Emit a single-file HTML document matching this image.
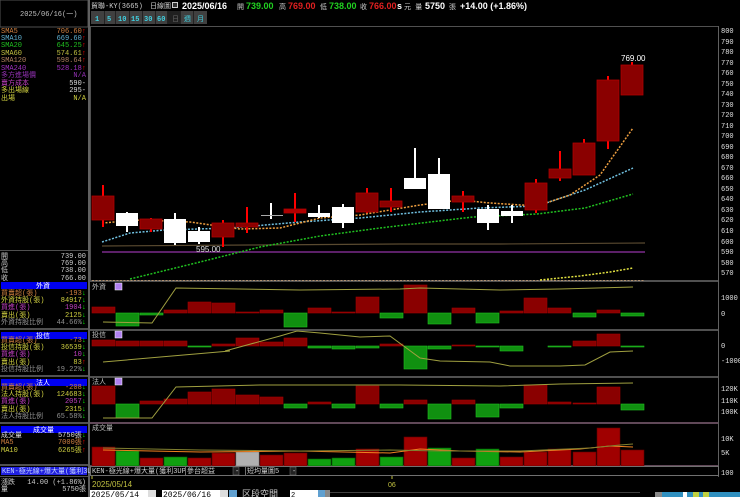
<!DOCTYPE html>
<html><head><meta charset="utf-8"><style>
html,body{margin:0;padding:0;background:#000;width:740px;height:497px;overflow:hidden}
svg{display:block}
text{font-family:"Liberation Mono","WenQuanYi Zen Hei","Noto Sans CJK TC",monospace;font-size:7px}
.b{font-family:"Liberation Sans","WenQuanYi Zen Hei",sans-serif;font-weight:bold;font-size:9px}
.ax{fill:#e0e0e0;font-family:"Liberation Sans",sans-serif;font-size:8px}
</style></head><body>
<svg width="740" height="497" viewBox="0 0 740 497" xmlns="http://www.w3.org/2000/svg">
<rect width="740" height="497" fill="#000"/>
<!-- left panel -->
<rect x="0" y="0" width="88" height="27" fill="#000" stroke="#505050"/>
<text x="20" y="16" fill="#c0c0c0">2025/06/16(一)</text>
<rect x="88" y="0" width="2" height="497" fill="#606060"/>
<g>
<text x="1" y="33" fill="#d08040">SMA5</text><text x="86" y="33" fill="#d08040" text-anchor="end">706.60<tspan fill="#f00">↑</tspan></text>
<text x="1" y="40" fill="#60b0d0">SMA10</text><text x="86" y="40" fill="#60b0d0" text-anchor="end">669.60<tspan fill="#f00">↑</tspan></text>
<text x="1" y="47" fill="#20c020">SMA20</text><text x="86" y="47" fill="#20c020" text-anchor="end">645.25<tspan fill="#f00">↑</tspan></text>
<text x="1" y="55" fill="#c0c040">SMA60</text><text x="86" y="55" fill="#c0c040" text-anchor="end">574.61<tspan fill="#f00">↑</tspan></text>
<text x="1" y="62" fill="#b08060">SMA120</text><text x="86" y="62" fill="#b08060" text-anchor="end">598.64<tspan fill="#f00">↑</tspan></text>
<text x="1" y="70" fill="#a030c0">SMA240</text><text x="86" y="70" fill="#a030c0" text-anchor="end">528.18<tspan fill="#f00">↑</tspan></text>
<text x="1" y="77" fill="#9030b0">多方進場價</text><text x="86" y="77" fill="#9030b0" text-anchor="end">N/A</text>
<text x="1" y="85" fill="#c040c0">賣方成本</text><text x="86" y="85" fill="#ddd" text-anchor="end">590-</text>
<text x="1" y="92" fill="#d0d040">多出場線</text><text x="86" y="92" fill="#ddd" text-anchor="end">295-</text>
<text x="1" y="100" fill="#d0d040">出場</text><text x="86" y="100" fill="#d0d040" text-anchor="end">N/A</text>
</g>
<rect x="0" y="250" width="88" height="1" fill="#505050"/>
<g fill="#ccc">
<text x="1" y="258">開</text><text x="86" y="258" text-anchor="end">739.00</text>
<text x="1" y="265">高</text><text x="86" y="265" text-anchor="end">769.00</text>
<text x="1" y="272">低</text><text x="86" y="272" text-anchor="end">738.00</text>
<text x="1" y="280">收</text><text x="86" y="280" text-anchor="end">766.00</text>
</g>
<rect x="1" y="282" width="86" height="7" fill="#0000f0"/><text x="36" y="288" fill="#fff">外資</text>
<text x="1" y="295" fill="#d08040">買賣超(張)</text><text x="86" y="295" fill="#d08040" text-anchor="end">-193<tspan fill="#0f0">↓</tspan></text>
<text x="1" y="302" fill="#d0d040">外資持股(張)</text><text x="86" y="302" fill="#d0d040" text-anchor="end">84917<tspan fill="#0f0">↓</tspan></text>
<text x="1" y="309" fill="#c040c0">買進(張)</text><text x="86" y="309" fill="#c040c0" text-anchor="end">1904<tspan fill="#0f0">↓</tspan></text>
<text x="1" y="317" fill="#d0d040">賣出(張)</text><text x="86" y="317" fill="#d0d040" text-anchor="end">2125<tspan fill="#0f0">↓</tspan></text>
<text x="1" y="324" fill="#909090">外資持股比例</text><text x="86" y="324" fill="#909090" text-anchor="end">44.66%<tspan fill="#0f0">↓</tspan></text>
<rect x="0" y="328" width="88" height="2" fill="#505050"/>
<rect x="1" y="332" width="86" height="7" fill="#0000f0"/><text x="36" y="338" fill="#fff">投信</text>
<text x="1" y="342" fill="#d08040">買賣超(張)</text><text x="86" y="342" fill="#d08040" text-anchor="end">-73<tspan fill="#0f0">↓</tspan></text>
<text x="1" y="349" fill="#d0d040">投信持股(張)</text><text x="86" y="349" fill="#d0d040" text-anchor="end">36539<tspan fill="#0f0">↓</tspan></text>
<text x="1" y="356" fill="#c040c0">買進(張)</text><text x="86" y="356" fill="#c040c0" text-anchor="end">10<tspan fill="#0f0">↓</tspan></text>
<text x="1" y="364" fill="#d0d040">賣出(張)</text><text x="86" y="364" fill="#d0d040" text-anchor="end">83<tspan fill="#f00">↑</tspan></text>
<text x="1" y="371" fill="#909090">投信持股比例</text><text x="86" y="371" fill="#909090" text-anchor="end">19.22%<tspan fill="#0f0">↓</tspan></text>
<rect x="0" y="375" width="88" height="2" fill="#505050"/>
<rect x="1" y="379" width="86" height="7" fill="#0000f0"/><text x="36" y="385" fill="#fff">法人</text>
<text x="1" y="389" fill="#d08040">買賣超(張)</text><text x="86" y="389" fill="#d08040" text-anchor="end">-208<tspan fill="#0f0">↓</tspan></text>
<text x="1" y="396" fill="#d0d040">法人持股(張)</text><text x="86" y="396" fill="#d0d040" text-anchor="end">124683<tspan fill="#0f0">↓</tspan></text>
<text x="1" y="403" fill="#c040c0">買進(張)</text><text x="86" y="403" fill="#c040c0" text-anchor="end">2057<tspan fill="#0f0">↓</tspan></text>
<text x="1" y="411" fill="#d0d040">賣出(張)</text><text x="86" y="411" fill="#d0d040" text-anchor="end">2315<tspan fill="#0f0">↓</tspan></text>
<text x="1" y="418" fill="#909090">法人持股比例</text><text x="86" y="418" fill="#909090" text-anchor="end">65.58%<tspan fill="#0f0">↓</tspan></text>
<rect x="0" y="422" width="88" height="2" fill="#505050"/>
<rect x="1" y="426" width="86" height="7" fill="#0000f0"/><text x="33" y="432" fill="#fff">成交量</text>
<text x="1" y="437" fill="#ddd">成交量</text><text x="86" y="437" fill="#ddd" text-anchor="end">5750張<tspan fill="#0f0">↓</tspan></text>
<text x="1" y="444" fill="#d08040">MA5</text><text x="86" y="444" fill="#d08040" text-anchor="end">7000張<tspan fill="#f00">↑</tspan></text>
<text x="1" y="452" fill="#d0d040">MA10</text><text x="86" y="452" fill="#d0d040" text-anchor="end">6265張<tspan fill="#f00">↑</tspan></text>
<rect x="0" y="464" width="88" height="2" fill="#505050"/>
<rect x="1" y="467" width="86" height="8" fill="#2020e0"/><text x="2" y="473" fill="#c0d0ff">KEN-極光線+爆大量(獲利3UP)</text>
<rect x="0" y="476" width="88" height="1" fill="#505050"/>
<text x="1" y="484" fill="#ccc">漲跌</text><text x="86" y="484" fill="#ccc" text-anchor="end">14.00 (+1.86%)</text>
<text x="1" y="491" fill="#ccc">量</text><text x="86" y="491" fill="#ccc" text-anchor="end">5750張</text>

<!-- header -->
<text x="91" y="8" fill="#ccc">貿聯-KY(3665)</text>
<text x="150" y="8" fill="#ccc">日線圖</text>
<rect x="172" y="2" width="6" height="6" fill="#ccc"/><rect x="173" y="3" width="4" height="4" fill="#333"/>
<text x="182" y="9" class="b" fill="#fff">2025/06/16</text>
<text x="237" y="9" fill="#ccc">開</text><text x="246" y="9" class="b" fill="#20d020">739.00</text>
<text x="279" y="9" fill="#ccc">高</text><text x="288" y="9" class="b" fill="#e02020">769.00</text>
<text x="320" y="9" fill="#ccc">低</text><text x="329" y="9" class="b" fill="#20d020">738.00</text>
<text x="360" y="9" fill="#ccc">收</text><text x="369" y="9" class="b" fill="#e02020">766.00</text>
<text x="397" y="9" class="b" fill="#fff">s</text><text x="404" y="9" fill="#ccc">元 量</text>
<text x="425" y="9" class="b" fill="#fff">5750</text><text x="449" y="9" fill="#ccc">張</text>
<text x="460" y="9" class="b" fill="#fff">+14.00 (+1.86%)</text>
<g>
<rect x="91" y="11" width="116" height="13" fill="#404040"/>
<g stroke="#222" stroke-width="1"><line x1="104.5" y1="11" x2="104.5" y2="24"/><line x1="115.5" y1="11" x2="115.5" y2="24"/><line x1="129.5" y1="11" x2="129.5" y2="24"/><line x1="142.5" y1="11" x2="142.5" y2="24"/><line x1="155.5" y1="11" x2="155.5" y2="24"/><line x1="167.5" y1="11" x2="167.5" y2="24"/><line x1="180.5" y1="11" x2="180.5" y2="24"/><line x1="193.5" y1="11" x2="193.5" y2="24"/></g>
<rect x="168" y="11" width="12" height="13" fill="#202020"/>
<g class="b" fill="#40d0e0" style="font-size:8px">
<text x="95" y="21">1</text><text x="107" y="21">5</text><text x="118" y="21">10</text><text x="131" y="21">15</text><text x="144" y="21">30</text><text x="157" y="21">60</text>
</g>
<text x="172" y="21" fill="#666">日</text><text x="184" y="21" fill="#40d0e0">週</text><text x="197" y="21" fill="#40d0e0">月</text>
</g>

<!-- chart frames -->
<rect x="90.5" y="26.5" width="628" height="254" fill="none" stroke="#505050"/>
<line x1="718.5" y1="26" x2="718.5" y2="477" stroke="#606060"/>
<rect x="90" y="280" width="628" height="2" fill="#505050"/>
<line x1="92" y1="280.5" x2="645" y2="280.5" stroke="#b09070" stroke-dasharray="2,1.5"/>
<rect x="90" y="329" width="628" height="2" fill="#505050"/>
<rect x="90" y="376" width="628" height="2" fill="#505050"/>
<rect x="90" y="422" width="628" height="2" fill="#604858"/>
<rect x="90" y="465" width="628" height="1" fill="#604858"/>

<!-- price axis -->
<g class="ax">
<text x="721" y="33">800</text><text x="721" y="44">790</text><text x="721" y="54">780</text><text x="721" y="65">770</text><text x="721" y="75">760</text><text x="721" y="86">750</text><text x="721" y="96">740</text><text x="721" y="107">730</text><text x="721" y="117">720</text><text x="721" y="128">710</text><text x="721" y="138">700</text><text x="721" y="149">690</text><text x="721" y="159">680</text><text x="721" y="170">670</text><text x="721" y="180">660</text><text x="721" y="191">650</text><text x="721" y="201">640</text><text x="721" y="212">630</text><text x="721" y="222">620</text><text x="721" y="233">610</text><text x="721" y="244">600</text><text x="721" y="254">590</text><text x="721" y="265">580</text><text x="721" y="275">570</text>
<text x="721" y="300">1000</text><text x="721" y="316">0</text>
<text x="721" y="348">0</text><text x="721" y="363">-1000</text>
<text x="721" y="391">120K</text><text x="721" y="403">110K</text><text x="721" y="414">100K</text>
<text x="721" y="441">10K</text><text x="721" y="455">5K</text><text x="721" y="475">100</text>
</g>

<!-- MA lines -->
<polyline points="102,252 645,252" fill="none" stroke="#7a2a8a" stroke-width="1.5"/>
<polyline points="102,246 250,245 400,244 500,244 645,243" fill="none" stroke="#5a4a30" stroke-width="1.2"/>
<polyline points="540,280 580,276 610,272 633,268" fill="none" stroke="#e0e040" stroke-width="1.5" stroke-dasharray="2,1.5"/>
<polyline points="130,279 200,262 260,247 320,236 380,228 430,222 473,217 537,214 585,208 633,194" fill="none" stroke="#20c020" stroke-width="1.5" stroke-dasharray="2,1.5"/>
<polyline points="102,242 130,233 165,230 230,228 300,222 360,218 420,212 480,208 537,206 585,190 633,168" fill="none" stroke="#70c0e0" stroke-width="1.5" stroke-dasharray="2,1.5"/>
<polyline points="102,223 140,220 190,222 240,229 280,228 320,218 360,215 420,205 460,200 490,203 537,206 570,195 600,175 633,128" fill="none" stroke="#f0a040" stroke-width="1.5" stroke-dasharray="2,1.5"/>

<!-- candles -->
<g stroke-width="2">
<g stroke="#f00">
<line x1="103" y1="185" x2="103" y2="227"/><line x1="151" y1="218" x2="151" y2="232"/><line x1="223" y1="220" x2="223" y2="247"/><line x1="247" y1="207" x2="247" y2="233"/><line x1="295" y1="193" x2="295" y2="222"/><line x1="367" y1="188" x2="367" y2="213"/><line x1="391" y1="188" x2="391" y2="212"/><line x1="463" y1="191" x2="463" y2="212"/><line x1="536" y1="179" x2="536" y2="213"/><line x1="560" y1="151" x2="560" y2="181"/><line x1="584" y1="139" x2="584" y2="175"/><line x1="608" y1="76" x2="608" y2="149"/><line x1="632" y1="62" x2="632" y2="95"/>
</g>
<g stroke="#fff">
<line x1="127" y1="212" x2="127" y2="232"/><line x1="175" y1="213" x2="175" y2="245"/><line x1="199" y1="227" x2="199" y2="244"/><line x1="271" y1="203" x2="271" y2="219"/><line x1="319" y1="205" x2="319" y2="218"/><line x1="343" y1="204" x2="343" y2="228"/><line x1="415" y1="148" x2="415" y2="189"/><line x1="439" y1="158" x2="439" y2="209"/><line x1="488" y1="205" x2="488" y2="230"/><line x1="512" y1="205" x2="512" y2="223"/>
</g>
</g>
<g fill="#8a0000" stroke="#b00000" stroke-width="0.8">
<rect x="92" y="196" width="22" height="24"/><rect x="140" y="219" width="22" height="10"/><rect x="212" y="223" width="22" height="14"/><rect x="236" y="223" width="22" height="4"/><rect x="284" y="209" width="22" height="4" fill="#b00000"/><rect x="356" y="193" width="22" height="19"/><rect x="380" y="201" width="22" height="6"/><rect x="452" y="196" width="22" height="6"/><rect x="525" y="183" width="22" height="27"/><rect x="549" y="169" width="22" height="9"/><rect x="573" y="143" width="22" height="32"/><rect x="597" y="80" width="22" height="61"/><rect x="621" y="65" width="22" height="30"/>
</g>
<g fill="#fff">
<rect x="116" y="213" width="22" height="13"/><rect x="164" y="219" width="22" height="24"/><rect x="188" y="231" width="22" height="11"/><rect x="308" y="213" width="22" height="4"/><rect x="332" y="207" width="22" height="16"/><rect x="404" y="178" width="22" height="11"/><rect x="428" y="174" width="22" height="35"/><rect x="477" y="209" width="22" height="14"/><rect x="501" y="211" width="22" height="5"/>
</g>
<rect x="261" y="215" width="22" height="1" fill="#aaa"/>
<text x="196" y="252" fill="#ddd" style="font-family:'Liberation Sans';font-size:8px">595.00</text>
<text x="621" y="61" fill="#fff" style="font-family:'Liberation Sans';font-size:8px">769.00</text>

<!-- sub panel labels -->
<text x="92" y="289" fill="#bbb">外資</text><rect x="115" y="283" width="7" height="7" fill="#b080f0" stroke="#fff" stroke-width="0.5"/>
<text x="92" y="337" fill="#bbb">投信</text><rect x="115" y="331" width="7" height="7" fill="#b080f0" stroke="#fff" stroke-width="0.5"/>
<text x="92" y="384" fill="#bbb">法人</text><rect x="115" y="378" width="7" height="7" fill="#b080f0" stroke="#fff" stroke-width="0.5"/>
<text x="92" y="430" fill="#bbb">成交量</text>

<!-- 外資 bars -->
<g fill="#8a0000" stroke="#a00000" stroke-width="0.6">
<rect x="92" y="307" width="23" height="6"/><rect x="164" y="310" width="23" height="3"/><rect x="188" y="302" width="23" height="11"/><rect x="212" y="303" width="23" height="10"/><rect x="236" y="312" width="23" height="1"/><rect x="260" y="310" width="23" height="3"/><rect x="308" y="308" width="23" height="5"/><rect x="332" y="312" width="23" height="1"/><rect x="356" y="297" width="23" height="16"/><rect x="404" y="285" width="23" height="28"/><rect x="452" y="308" width="23" height="5"/><rect x="500" y="311" width="23" height="2"/><rect x="524" y="298" width="23" height="15"/><rect x="548" y="308" width="23" height="5"/><rect x="597" y="310" width="23" height="3"/>
</g>
<g fill="#109010" stroke="#20c020" stroke-width="0.6">
<rect x="116" y="313" width="23" height="13"/><rect x="140" y="313" width="23" height="2"/><rect x="284" y="313" width="23" height="14"/><rect x="380" y="313" width="23" height="5"/><rect x="428" y="313" width="23" height="11"/><rect x="476" y="313" width="23" height="10"/><rect x="573" y="313" width="23" height="4"/><rect x="621" y="313" width="23" height="3"/>
</g>
<polyline points="103,322 152,323 176,288 300,290 400,289 420,288 500,290 560,289 633,287" fill="none" stroke="#a0a040" stroke-width="1"/>

<!-- 投信 bars -->
<g fill="#8a0000" stroke="#a00000" stroke-width="0.6">
<rect x="92" y="340" width="23" height="6"/><rect x="116" y="341" width="23" height="5"/><rect x="140" y="341" width="23" height="5"/><rect x="164" y="341" width="23" height="5"/><rect x="212" y="344" width="23" height="2"/><rect x="236" y="338" width="23" height="8"/><rect x="260" y="342" width="23" height="4"/><rect x="284" y="338" width="23" height="8"/><rect x="380" y="344" width="23" height="2"/><rect x="452" y="345" width="23" height="1"/><rect x="573" y="341" width="23" height="5"/><rect x="597" y="334" width="23" height="12"/>
</g>
<g fill="#109010" stroke="#20c020" stroke-width="0.6">
<rect x="188" y="346" width="23" height="1"/><rect x="308" y="346" width="23" height="2"/><rect x="332" y="346" width="23" height="3"/><rect x="356" y="346" width="23" height="2"/><rect x="404" y="346" width="23" height="23"/><rect x="428" y="346" width="23" height="3"/><rect x="476" y="346" width="23" height="1"/><rect x="500" y="346" width="23" height="5"/><rect x="548" y="346" width="23" height="1"/><rect x="621" y="346" width="23" height="1"/>
</g>
<polyline points="103,362 230,351 225,351 280,336 297,331 320,333 360,337 390,336 420,358 440,361 490,362 510,366 560,366 585,365 610,352 633,351" fill="none" stroke="#a0a040" stroke-width="1"/>

<!-- 法人 bars -->
<g fill="#8a0000" stroke="#a00000" stroke-width="0.6">
<rect x="92" y="386" width="23" height="18"/><rect x="140" y="401" width="23" height="3"/><rect x="164" y="399" width="23" height="5"/><rect x="188" y="392" width="23" height="12"/><rect x="212" y="389" width="23" height="15"/><rect x="236" y="395" width="23" height="9"/><rect x="260" y="397" width="23" height="7"/><rect x="308" y="402" width="23" height="2"/><rect x="356" y="386" width="23" height="18"/><rect x="404" y="400" width="23" height="4"/><rect x="452" y="400" width="23" height="4"/><rect x="524" y="385" width="23" height="19"/><rect x="548" y="402" width="23" height="2"/><rect x="573" y="403" width="23" height="1"/><rect x="597" y="387" width="23" height="17"/>
</g>
<g fill="#109010" stroke="#20c020" stroke-width="0.6">
<rect x="116" y="404" width="23" height="14"/><rect x="284" y="404" width="23" height="4"/><rect x="332" y="404" width="23" height="4"/><rect x="380" y="404" width="23" height="4"/><rect x="428" y="404" width="23" height="15"/><rect x="476" y="404" width="23" height="13"/><rect x="500" y="404" width="23" height="4"/><rect x="621" y="404" width="23" height="6"/>
</g>
<polyline points="103,418 152,418 176,387 260,385 400,385 500,386 560,384 633,383" fill="none" stroke="#a0a040" stroke-width="1"/>

<!-- volume -->
<g fill="#a00000" stroke="#600000" stroke-width="0.6">
<rect x="92" y="447" width="23" height="19"/><rect x="140" y="458" width="23" height="8"/><rect x="188" y="458" width="23" height="8"/><rect x="212" y="453" width="23" height="13"/><rect x="260" y="455" width="23" height="11"/><rect x="284" y="453" width="23" height="13"/><rect x="356" y="449" width="23" height="17"/><rect x="404" y="437" width="23" height="29"/><rect x="452" y="458" width="23" height="8"/><rect x="500" y="457" width="23" height="9"/><rect x="524" y="452" width="23" height="14"/><rect x="548" y="449" width="23" height="17"/><rect x="573" y="452" width="23" height="14"/><rect x="597" y="428" width="23" height="38"/><rect x="621" y="450" width="23" height="16"/>
</g>
<g fill="#10a010" stroke="#006000" stroke-width="0.6">
<rect x="116" y="451" width="23" height="15"/><rect x="164" y="457" width="23" height="9"/><rect x="308" y="459" width="23" height="7"/><rect x="332" y="458" width="23" height="8"/><rect x="380" y="457" width="23" height="9"/><rect x="428" y="448" width="23" height="18"/><rect x="476" y="449" width="23" height="17"/>
</g>
<rect x="236" y="452" width="23" height="14" fill="#b0b0b0" stroke="#808080" stroke-width="0.6"/>
<polyline points="103,450 200,452 300,451 390,453 420,449 460,451 520,452 580,449 610,446 633,447" fill="none" stroke="#f08020" stroke-width="1"/>
<polyline points="103,448 200,450 300,451 390,450 440,451 520,451 590,448 620,445 633,444" fill="none" stroke="#808030" stroke-width="1"/>

<!-- indicator selector row -->
<rect x="90.5" y="466.5" width="628" height="9" fill="#000" stroke="#707070"/>
<text x="92" y="473" fill="#ccc">KEN-極光線+爆大量(獲利3UP)</text>
<rect x="185.5" y="466.5" width="48" height="9" fill="#000" stroke="#707070"/><text x="187" y="473" fill="#ccc">參台超益</text><rect x="233" y="467" width="6" height="8" fill="#222" stroke="#777" stroke-width="0.5"/><text x="235" y="473" fill="#ccc">-</text>
<rect x="245.5" y="466.5" width="45" height="9" fill="#000" stroke="#707070"/><text x="247" y="473" fill="#ccc">短均量圖5</text><rect x="290" y="467" width="6" height="8" fill="#222" stroke="#777" stroke-width="0.5"/><text x="292" y="473" fill="#ccc">-</text>
<line x1="92" y1="476" x2="92" y2="479" stroke="#c0c040"/>
<text x="92" y="487" fill="#c0c040" style="font-family:'Liberation Sans';font-size:8px">2025/05/14</text>
<line x1="392" y1="476" x2="392" y2="479" stroke="#c0c040"/>
<text x="388" y="487" fill="#c0c040" style="font-family:'Liberation Sans';font-size:7px">06</text>

<!-- bottom toolbar -->
<rect x="90" y="489" width="650" height="8" fill="#000"/>
<rect x="90" y="490" width="58" height="7" fill="#fff"/><text x="91" y="497" fill="#000" style="font-size:8px">2025/05/14</text><rect x="148" y="490" width="8" height="7" fill="#ddd"/>
<rect x="162" y="490" width="58" height="7" fill="#fff"/><text x="163" y="497" fill="#000" style="font-size:8px">2025/06/16</text><rect x="220" y="490" width="8" height="7" fill="#ddd"/><rect x="229" y="490" width="8" height="7" fill="#60a0d0"/>
<text x="242" y="497" fill="#ccc" style="font-size:9px">区段空間</text>
<rect x="290" y="490" width="28" height="7" fill="#fff"/><text x="291" y="497" fill="#000">2</text><rect x="318" y="490" width="7" height="7" fill="#60a0d0"/><rect x="325" y="490" width="5" height="7" fill="#888"/>
<rect x="330" y="492" width="310" height="1" fill="#404040"/>
<rect x="655" y="492" width="85" height="5" fill="#3090c0"/>
<rect x="655" y="492" width="7" height="5" fill="#888"/>
<rect x="683" y="492" width="4" height="5" fill="#fff"/><rect x="693" y="492" width="6" height="5" fill="#c0d040"/><rect x="703" y="492" width="6" height="5" fill="#c0d040"/>
</svg>
</body></html>
